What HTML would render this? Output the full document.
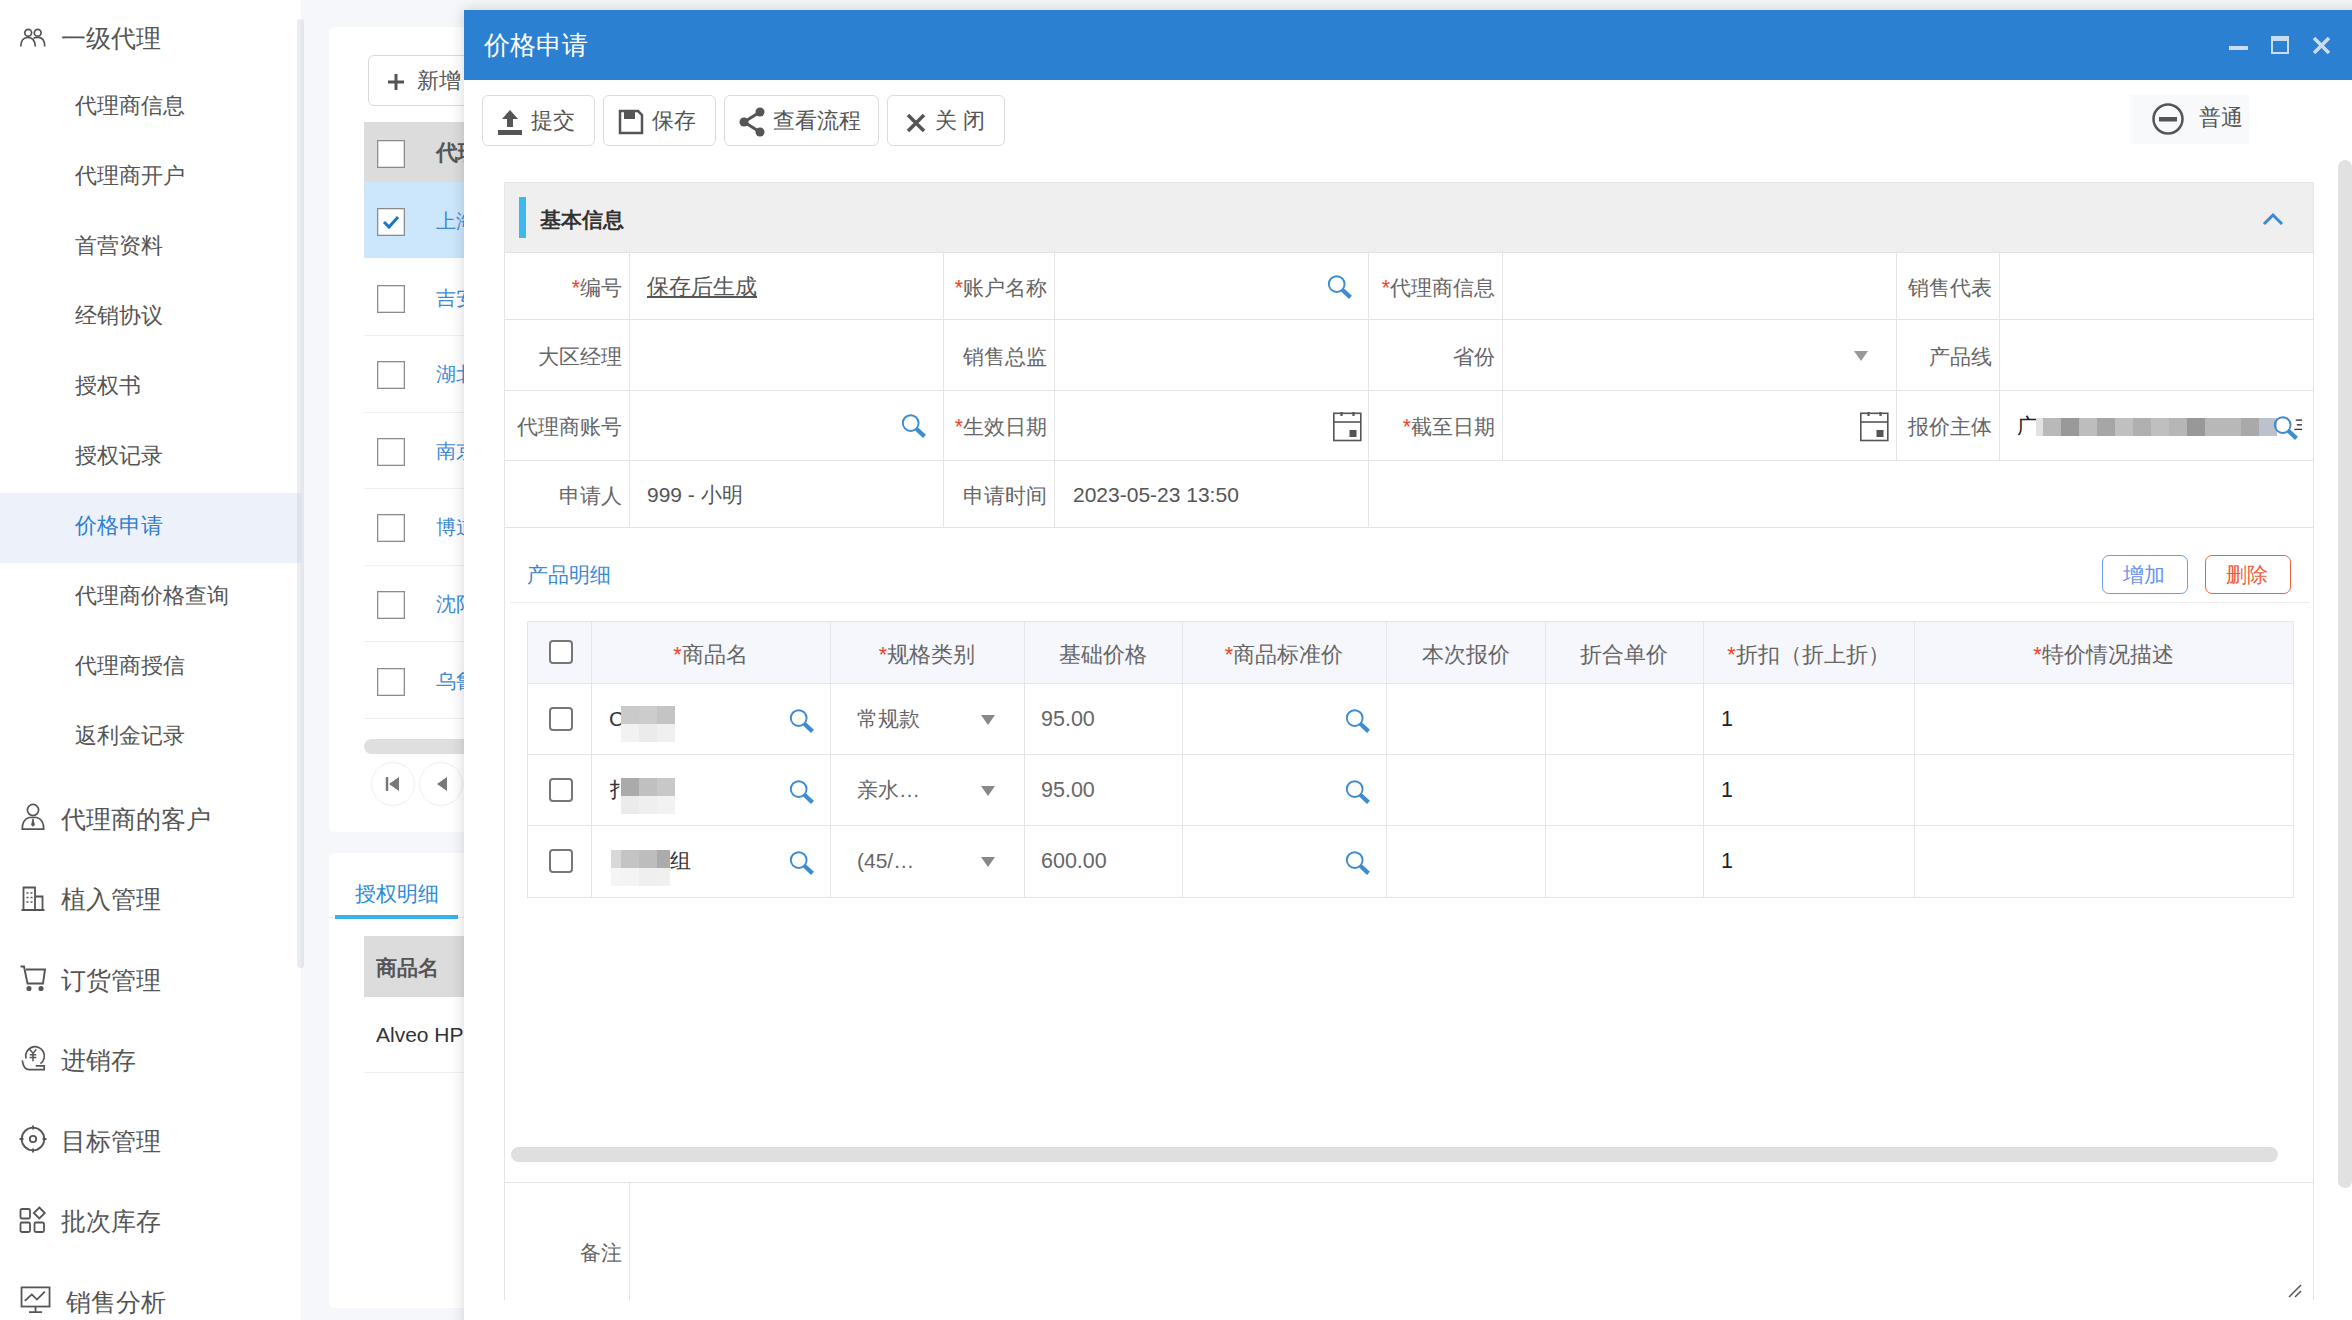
<!DOCTYPE html>
<html><head><meta charset="utf-8">
<style>
*{box-sizing:border-box;margin:0;padding:0}
html,body{width:2352px;height:1320px;overflow:hidden;background:#f5f7fb;font-family:"Liberation Sans",sans-serif;color:#555}
.a{position:absolute}
.t{position:absolute;white-space:nowrap;line-height:1}
/* sidebar */
#side{position:absolute;left:0;top:0;width:301px;height:1320px;background:#fff}
.si{position:absolute;left:75px;font-size:22.25px;margin-top:2px;color:#555;white-space:nowrap;line-height:1}
.sg{position:absolute;left:61px;font-size:25px;color:#555;white-space:nowrap;line-height:1}
.ic{position:absolute;left:19px;width:28px;height:28px}
.cbx{width:28px;height:28px;border:1px solid #8c8c8c;box-shadow:inset 0 0 0 0.5px #bbb;background:#fff}
.blu{font-size:20px;color:#3d8bd6;margin-top:2px}
.rl{left:364px;width:300px;height:1px;background:#eef0f4}
.tb{top:95px;height:51px;border:1px solid #dcdcdc;border-radius:6px;background:#fff}
.tbt{top:110px;font-size:22px;color:#555}
.hl{left:504px;width:1810px;height:1px;background:#e4e4e4}
.vl{width:1px;background:#e4e4e4}
.lb{font-size:21.25px;color:#666;margin-top:2.5px}
.th{font-size:21.5px;color:#666;text-align:center;margin-top:2.5px}
.rcb{width:24px;height:24px;border:2px solid #777;border-radius:4px;background:#fff}
</style></head><body>

<svg width="0" height="0" style="position:absolute"><defs>
<g id="srch"><circle cx="10.7" cy="10.1" r="7.9" fill="none" stroke="#3d8bd0" stroke-width="1.9"/><path d="M16.3 15.8l8.2 7.6" stroke="#3d8bd0" stroke-width="4.2"/></g>
<g id="cal" fill="none" stroke="#555" stroke-width="1.6"><rect x="0.8" y="1.3" width="27" height="27.2"/><path d="M0.8 10h27"/><path d="M8.5 0v4M20.5 0v4" stroke-width="2.2"/><rect x="16.5" y="18" width="7" height="7" fill="#555" stroke="none"/></g>
</defs></svg>
<div id="side">
  <div class="a" style="left:0;top:493px;width:301px;height:70px;background:#edf2fa"></div>
  <svg class="ic" style="top:24px" viewBox="0 0 28 28" fill="none" stroke="#555" stroke-width="1.7"><circle cx="9.2" cy="8.7" r="3.4"/><circle cx="18.7" cy="8.7" r="3.4"/><path d="M1.8 22.4C1.8 16.5 5 13.3 9 13.3S16.3 16.5 16.3 22.4"/><path d="M14.5 14.3C15.6 13.6 17 13.3 18.7 13.3 23 13.3 25.8 16.5 25.8 22.4"/></svg>
  <div class="sg" style="top:26px">一级代理</div>
  <div class="si" style="top:93px">代理商信息</div>
  <div class="si" style="top:163px">代理商开户</div>
  <div class="si" style="top:233px">首营资料</div>
  <div class="si" style="top:303px">经销协议</div>
  <div class="si" style="top:373px">授权书</div>
  <div class="si" style="top:443px">授权记录</div>
  <div class="si" style="top:513px;color:#2f7fd1">价格申请</div>
  <div class="si" style="top:583px">代理商价格查询</div>
  <div class="si" style="top:653px">代理商授信</div>
  <div class="si" style="top:723px">返利金记录</div>
  <svg class="ic" style="top:803px" viewBox="0 0 28 30" fill="none" stroke="#555" stroke-width="1.8"><circle cx="14" cy="7.5" r="6"/><path d="M2.5 28Q2.5 17.5 10 15.5H18Q25.5 17.5 25.5 28Z"/><path d="M14 17l-1.5 6.5L14 25l1.5-1.5z" fill="#555" stroke-width="1"/></svg>
  <div class="sg" style="top:807px">代理商的客户</div>
  <svg class="ic" style="top:885px" viewBox="0 0 28 28" fill="none" stroke="#555" stroke-width="1.8"><path d="M4.5 25V2.5H16V25M16 11.5h7.5V25M2.5 25h23"/><path d="M7.5 8h2M11.5 8h2M7.5 12.5h2M11.5 12.5h2M7.5 17h2M11.5 17h2" stroke-width="1.6"/></svg>
  <div class="sg" style="top:887px">植入管理</div>
  <svg class="ic" style="top:964px" viewBox="0 0 28 28" fill="none" stroke="#555" stroke-width="1.9"><path d="M1.5 2.5h3.5l3.5 17H24l2-14H7"/><circle cx="10" cy="24.5" r="1.6" fill="#555"/><circle cx="22" cy="24.5" r="1.6" fill="#555"/></svg>
  <div class="sg" style="top:968px">订货管理</div>
  <svg class="ic" style="top:1044px" viewBox="0 0 28 30" fill="none" stroke="#555" stroke-width="1.8"><path d="M6.5 15.5A10 10 0 1 1 22 21"/><path d="M10.5 6l3.5 4 3.5-4M14 10v8.5M10.5 11.5h7M10.5 14.5h7" stroke-width="1.6"/><path d="M2.5 17.5C3.5 25 7 27.5 10 27.5H26V23.5H17"/></svg>
  <div class="sg" style="top:1048px">进销存</div>
  <svg class="ic" style="top:1125px" viewBox="0 0 28 28" fill="none" stroke="#555" stroke-width="1.8"><circle cx="14" cy="14" r="11.3"/><circle cx="14" cy="14" r="3.2"/><path d="M14 0.5v4M14 23.5v4M0.5 14h4M23.5 14h4"/></svg>
  <div class="sg" style="top:1129px">目标管理</div>
  <svg class="ic" style="top:1206px" viewBox="0 0 28 28" fill="none" stroke="#555" stroke-width="1.8"><rect x="1.5" y="3" width="9.5" height="9.5" rx="1.5"/><rect x="1.5" y="16.5" width="9.5" height="9.5" rx="1.5"/><rect x="15.5" y="16.5" width="9.5" height="9.5" rx="1.5"/><path d="M20.3 1.5l5.5 5.5-5.5 5.5-5.5-5.5z"/></svg>
  <div class="sg" style="top:1209px">批次库存</div>
  <svg class="ic" style="top:1286px;width:34px" viewBox="0 0 34 30" fill="none" stroke="#555" stroke-width="1.9"><rect x="1.5" y="1.5" width="30" height="20.5"/><path d="M5 16l7.5-7 5.5 5.5 8.5-8.5M16.5 22v5M9.5 28h14"/></svg>
  <div class="sg" style="top:1290px;left:66px">销售分析</div>
  <div class="a" style="left:297px;top:19px;width:7px;height:949px;background:rgba(190,196,204,0.32);border-radius:4px"></div>
</div>

<!-- BG -->
<div id="bg">
  <div class="a" style="left:329px;top:27px;width:400px;height:805px;background:#fff;border-radius:6px"></div>
  <div class="a" style="left:368px;top:55px;width:200px;height:51px;border:1px solid #d9d9d9;border-radius:6px;background:#fff"></div>
  <svg class="a" style="left:387px;top:73px" width="18" height="18" viewBox="0 0 18 18"><path d="M9 1v16M1 9h16" stroke="#555" stroke-width="3"/></svg>
  <div class="t" style="left:417px;top:70px;font-size:22px;color:#555">新增</div>
  <div class="a" style="left:364px;top:122px;width:300px;height:60px;background:#dcdcdc"></div>
  <div class="a" style="left:364px;top:182px;width:300px;height:76px;background:#cce6fb"></div>
  <div class="t" style="left:436px;top:142px;font-size:22px;font-weight:bold;color:#555">代理</div>
  <div class="a cbx" style="left:377px;top:140px"></div>
  <div class="a cbx" style="left:377px;top:208px"></div>
  <svg class="a" style="left:381px;top:213px" width="20" height="18" viewBox="0 0 20 18"><path d="M3 9l5 5 9-10" stroke="#1a75c9" stroke-width="3" fill="none"/></svg>
  <div class="t blu" style="left:436px;top:209px">上海</div>
  <div class="a cbx" style="left:377px;top:285px"></div>
  <div class="t blu" style="left:436px;top:286px">吉安</div>
  <div class="a rl" style="top:335px"></div>
  <div class="a cbx" style="left:377px;top:361px"></div>
  <div class="t blu" style="left:436px;top:362px">湖北</div>
  <div class="a rl" style="top:412px"></div>
  <div class="a cbx" style="left:377px;top:438px"></div>
  <div class="t blu" style="left:436px;top:439px">南京</div>
  <div class="a rl" style="top:488px"></div>
  <div class="a cbx" style="left:377px;top:514px"></div>
  <div class="t blu" style="left:436px;top:515px">博道</div>
  <div class="a rl" style="top:565px"></div>
  <div class="a cbx" style="left:377px;top:591px"></div>
  <div class="t blu" style="left:436px;top:592px">沈阳</div>
  <div class="a rl" style="top:641px"></div>
  <div class="a cbx" style="left:377px;top:668px"></div>
  <div class="t blu" style="left:436px;top:669px">乌鲁</div>
  <div class="a rl" style="top:718px"></div>
  <div class="a" style="left:364px;top:739px;width:300px;height:15px;background:#dfdfdf;border-radius:8px"></div>
  <div class="a" style="left:371px;top:762px;width:44px;height:44px;border:1px solid #eceef3;border-radius:50%;background:#fff"></div>
  <svg class="a" style="left:385px;top:775px" width="16" height="18" viewBox="0 0 16 18"><path d="M2 2v14" stroke="#777" stroke-width="2.5"/><path d="M14 2v14L4 9z" fill="#777"/></svg>
  <div class="a" style="left:419px;top:762px;width:44px;height:44px;border:1px solid #eceef3;border-radius:50%;background:#fff"></div>
  <svg class="a" style="left:434px;top:775px" width="16" height="18" viewBox="0 0 16 18"><path d="M13 2v14L3 9z" fill="#777"/></svg>
  <div class="a" style="left:329px;top:853px;width:400px;height:455px;background:#fff;border-radius:6px"></div>
  <div class="a" style="left:329px;top:917px;width:300px;height:1px;background:#eceef2"></div>
  <div class="t" style="left:355px;top:883px;font-size:21px;color:#2d8ad8">授权明细</div>
  <div class="a" style="left:335px;top:915px;width:123px;height:4px;background:#3bb1ec"></div>
  <div class="a" style="left:364px;top:936px;width:300px;height:61px;background:#dcdcdc"></div>
  <div class="t" style="left:376px;top:957px;font-size:21px;font-weight:bold;color:#555">商品名</div>
  <div class="t" style="left:376px;top:1024px;font-size:21px;color:#333">Alveo HP</div>
  <div class="a rl" style="top:1072px"></div>
</div>

<!-- MODAL -->
<div id="modal">
  <div class="a" style="left:464px;top:10px;width:1900px;height:1320px;background:#fff;box-shadow:0 0 14px rgba(0,0,0,0.17)"></div>
  <div class="a" style="left:464px;top:10px;width:1900px;height:70px;background:#2b80d2"></div>
  <div class="t" style="left:484px;top:32px;font-size:26px;color:#fff">价格申请</div>
  <div class="a" style="left:2229px;top:46px;width:19px;height:4px;background:#c9ddf1"></div>
  <div class="a" style="left:2271px;top:36px;width:18px;height:18px;border:2px solid #c9ddf1;border-top-width:5px"></div>
  <svg class="a" style="left:2312px;top:36px" width="19" height="19" viewBox="0 0 19 19"><path d="M2 2l15 15M17 2L2 17" stroke="#c9ddf1" stroke-width="3.5"/></svg>

  <div class="a tb" style="left:482px;width:113px"></div>
  <svg class="a" style="left:497px;top:108px" width="26" height="27" viewBox="0 0 26 27"><path d="M13 2l-8 9h5v8h6v-8h5z" fill="#555"/><rect x="1" y="22" width="24" height="5" fill="#555"/></svg>
  <div class="t tbt" style="left:531px">提交</div>
  <div class="a tb" style="left:603px;width:113px"></div>
  <svg class="a" style="left:618px;top:109px" width="26" height="26" viewBox="0 0 26 26"><path d="M2 2h18l4 4v18H2z" fill="none" stroke="#555" stroke-width="2.5"/><rect x="6" y="2" width="11" height="8" fill="#555"/></svg>
  <div class="t tbt" style="left:652px">保存</div>
  <div class="a tb" style="left:724px;width:155px"></div>
  <svg class="a" style="left:738px;top:107px" width="28" height="30" viewBox="0 0 28 30"><path d="M22 5L6 15l16 10" fill="none" stroke="#555" stroke-width="3"/><circle cx="22" cy="5" r="4.5" fill="#555"/><circle cx="6" cy="15" r="4.5" fill="#555"/><circle cx="22" cy="25" r="4.5" fill="#555"/></svg>
  <div class="t tbt" style="left:773px">查看流程</div>
  <div class="a tb" style="left:887px;width:118px"></div>
  <svg class="a" style="left:906px;top:113px" width="20" height="20" viewBox="0 0 20 20"><path d="M2 2l16 16M18 2L2 18" stroke="#555" stroke-width="3.5"/></svg>
  <div class="t tbt" style="left:935px">关 闭</div>

  <div class="a" style="left:2130px;top:95px;width:119px;height:49px;background:#f8f9fb"></div>
  <svg class="a" style="left:2152px;top:103px" width="32" height="32" viewBox="0 0 32 32"><circle cx="16" cy="16" r="14.5" fill="none" stroke="#555" stroke-width="2.5"/><rect x="7" y="14" width="18" height="4.5" fill="#555"/></svg>
  <div class="t" style="left:2199px;top:107px;font-size:22px;color:#555">普通</div>

<div class="a" style="left:504px;top:182px;width:1810px;height:71px;background:#efefef;border:1px solid #e6e6e6;border-bottom:none"></div>
<div class="a" style="left:519px;top:197px;width:7px;height:41px;background:#3cb8ef"></div>
<div class="t" style="left:540px;top:209px;font-size:21px;font-weight:bold;color:#333">基本信息</div>
<svg class="a" style="left:2262px;top:211px" width="22" height="16" viewBox="0 0 22 16"><path d="M2 13l9-9 9 9" fill="none" stroke="#3a8ad3" stroke-width="3"/></svg>
<div class="a hl" style="top:252px"></div>
<div class="a hl" style="top:319px"></div>
<div class="a hl" style="top:390px"></div>
<div class="a hl" style="top:460px"></div>
<div class="a hl" style="top:527px"></div>
<div class="a vl" style="left:504px;top:252px;height:275px"></div>
<div class="a vl" style="left:629px;top:252px;height:275px"></div>
<div class="a vl" style="left:943px;top:252px;height:275px"></div>
<div class="a vl" style="left:1054px;top:252px;height:275px"></div>
<div class="a vl" style="left:1368px;top:252px;height:275px"></div>
<div class="a vl" style="left:1502px;top:252px;height:208px"></div>
<div class="a vl" style="left:1896px;top:252px;height:208px"></div>
<div class="a vl" style="left:1999px;top:252px;height:208px"></div>
<div class="a vl" style="left:2313px;top:252px;height:275px"></div>
<div class="t lb" style="right:1730px;top:275px"><span style="color:#f0431f">*</span>编号</div>
<div class="t lb" style="right:1305px;top:275px"><span style="color:#f0431f">*</span>账户名称</div>
<div class="t lb" style="right:857px;top:275px"><span style="color:#f0431f">*</span>代理商信息</div>
<div class="t lb" style="right:360px;top:275px">销售代表</div>
<div class="t lb" style="right:1730px;top:344px">大区经理</div>
<div class="t lb" style="right:1305px;top:344px">销售总监</div>
<div class="t lb" style="right:857px;top:344px">省份</div>
<div class="t lb" style="right:360px;top:344px">产品线</div>
<div class="t lb" style="right:1730px;top:414px">代理商账号</div>
<div class="t lb" style="right:1305px;top:414px"><span style="color:#f0431f">*</span>生效日期</div>
<div class="t lb" style="right:857px;top:414px"><span style="color:#f0431f">*</span>截至日期</div>
<div class="t lb" style="right:360px;top:414px">报价主体</div>
<div class="t lb" style="right:1730px;top:483px">申请人</div>
<div class="t lb" style="right:1305px;top:483px">申请时间</div>
<div class="t" style="left:647px;top:276px;font-size:22px;color:#555;text-decoration:underline">保存后生成</div>
<div class="t" style="left:647px;top:484px;font-size:21px;color:#555">999 - 小明</div>
<div class="t" style="left:1073px;top:484px;font-size:21px;color:#555">2023-05-23 13:50</div>
<svg class="a srch" style="left:1326px;top:274px" width="28" height="28" viewBox="0 0 28 28"><use href="#srch"/></svg>
<svg class="a srch" style="left:900px;top:413px" width="28" height="28" viewBox="0 0 28 28"><use href="#srch"/></svg>
<svg class="a" style="left:1333px;top:412px" width="30" height="30" viewBox="0 0 30 30"><use href="#cal"/></svg>
<svg class="a" style="left:1860px;top:412px" width="30" height="30" viewBox="0 0 30 30"><use href="#cal"/></svg>
<svg class="a" style="left:1853px;top:350px" width="16" height="12" viewBox="0 0 16 12"><path d="M1 1h14L8 11z" fill="#999"/></svg>
<div class="t" style="left:2017px;top:415px;font-size:21px;color:#222">广</div>
<div class="a" style="left:2036px;top:418px;width:7px;height:18px;background:#e2e2e2"></div><div class="a" style="left:2043px;top:418px;width:18px;height:18px;background:#b9b9b9"></div><div class="a" style="left:2061px;top:418px;width:18px;height:18px;background:#999999"></div><div class="a" style="left:2079px;top:418px;width:18px;height:18px;background:#bdbdbd"></div><div class="a" style="left:2097px;top:418px;width:18px;height:18px;background:#a6a6a6"></div><div class="a" style="left:2115px;top:418px;width:18px;height:18px;background:#c0c0c0"></div><div class="a" style="left:2133px;top:418px;width:18px;height:18px;background:#b0b0b0"></div><div class="a" style="left:2151px;top:418px;width:18px;height:18px;background:#bfbfbf"></div><div class="a" style="left:2169px;top:418px;width:18px;height:18px;background:#b6b6b6"></div><div class="a" style="left:2187px;top:418px;width:18px;height:18px;background:#989898"></div><div class="a" style="left:2205px;top:418px;width:36px;height:18px;background:#b8b8b8"></div><div class="a" style="left:2241px;top:418px;width:18px;height:18px;background:#a9a9a9"></div><div class="a" style="left:2259px;top:418px;width:18px;height:18px;background:#bcc2cb"></div>
<svg class="a srch" style="left:2272px;top:415px" width="28" height="28" viewBox="0 0 28 28"><use href="#srch"/></svg>
<div class="t" style="left:2294px;top:415px;font-size:21px;color:#333;width:8px;overflow:hidden">丰</div>
<div class="t" style="left:527px;top:564px;font-size:21px;color:#3a8ad3">产品明细</div>
<div class="a" style="left:510px;top:602px;width:1800px;height:1px;background:#eeeeee"></div>
<div class="a" style="left:2102px;top:555px;width:86px;height:39px;border:1px solid #6f97f3;border-radius:7px"></div>
<div class="t" style="left:2123px;top:564px;font-size:21px;color:#6a93ef">增加</div>
<div class="a" style="left:2205px;top:555px;width:86px;height:39px;border:1px solid #f0603f;border-radius:7px"></div>
<div class="t" style="left:2226px;top:564px;font-size:21px;color:#ef5b3a">删除</div>
<div class="a" style="left:527px;top:621px;width:1767px;height:62px;background:#f6f7fc"></div>
<div class="a" style="left:527px;top:621px;width:1767px;height:1px;background:#e4e6ea"></div>
<div class="a" style="left:527px;top:683px;width:1767px;height:1px;background:#e4e6ea"></div>
<div class="a" style="left:527px;top:754px;width:1767px;height:1px;background:#e4e6ea"></div>
<div class="a" style="left:527px;top:825px;width:1767px;height:1px;background:#e4e6ea"></div>
<div class="a" style="left:527px;top:897px;width:1767px;height:1px;background:#e4e6ea"></div>
<div class="a" style="left:527px;top:621px;width:1px;height:277px;background:#e4e6ea"></div>
<div class="a" style="left:591px;top:621px;width:1px;height:277px;background:#e4e6ea"></div>
<div class="a" style="left:830px;top:621px;width:1px;height:277px;background:#e4e6ea"></div>
<div class="a" style="left:1024px;top:621px;width:1px;height:277px;background:#e4e6ea"></div>
<div class="a" style="left:1182px;top:621px;width:1px;height:277px;background:#e4e6ea"></div>
<div class="a" style="left:1386px;top:621px;width:1px;height:277px;background:#e4e6ea"></div>
<div class="a" style="left:1545px;top:621px;width:1px;height:277px;background:#e4e6ea"></div>
<div class="a" style="left:1703px;top:621px;width:1px;height:277px;background:#e4e6ea"></div>
<div class="a" style="left:1914px;top:621px;width:1px;height:277px;background:#e4e6ea"></div>
<div class="a" style="left:2293px;top:621px;width:1px;height:277px;background:#e4e6ea"></div>
<div class="t th" style="left:591px;width:239px;top:642px"><span style="color:#f0431f">*</span>商品名</div>
<div class="t th" style="left:830px;width:194px;top:642px"><span style="color:#f0431f">*</span>规格类别</div>
<div class="t th" style="left:1024px;width:158px;top:642px">基础价格</div>
<div class="t th" style="left:1182px;width:204px;top:642px"><span style="color:#f0431f">*</span>商品标准价</div>
<div class="t th" style="left:1386px;width:159px;top:642px">本次报价</div>
<div class="t th" style="left:1545px;width:158px;top:642px">折合单价</div>
<div class="t th" style="left:1703px;width:211px;top:642px"><span style="color:#f0431f">*</span>折扣（折上折）</div>
<div class="t th" style="left:1914px;width:379px;top:642px"><span style="color:#f0431f">*</span>特价情况描述</div>
<div class="a rcb" style="left:549px;top:640px"></div>
<div class="a rcb" style="left:549px;top:707px"></div>
<div class="a rcb" style="left:549px;top:778px"></div>
<div class="a rcb" style="left:549px;top:849px"></div>
<svg class="a" style="left:788px;top:708px" width="28" height="28" viewBox="0 0 28 28"><use href="#srch"/></svg>
<svg class="a" style="left:1344px;top:708px" width="28" height="28" viewBox="0 0 28 28"><use href="#srch"/></svg>
<div class="t" style="left:857px;top:708px;font-size:21px;color:#666">常规款</div>
<svg class="a" style="left:980px;top:714px" width="16" height="12" viewBox="0 0 16 12"><path d="M1 1h14L8 11z" fill="#888"/></svg>
<div class="t" style="left:1041px;top:709px;font-size:21.5px;color:#666">95.00</div>
<div class="t" style="left:1721px;top:709px;font-size:21.5px;color:#222">1</div>
<svg class="a" style="left:788px;top:779px" width="28" height="28" viewBox="0 0 28 28"><use href="#srch"/></svg>
<svg class="a" style="left:1344px;top:779px" width="28" height="28" viewBox="0 0 28 28"><use href="#srch"/></svg>
<div class="t" style="left:857px;top:779px;font-size:21px;color:#666">亲水…</div>
<svg class="a" style="left:980px;top:785px" width="16" height="12" viewBox="0 0 16 12"><path d="M1 1h14L8 11z" fill="#888"/></svg>
<div class="t" style="left:1041px;top:780px;font-size:21.5px;color:#666">95.00</div>
<div class="t" style="left:1721px;top:780px;font-size:21.5px;color:#222">1</div>
<svg class="a" style="left:788px;top:850px" width="28" height="28" viewBox="0 0 28 28"><use href="#srch"/></svg>
<svg class="a" style="left:1344px;top:850px" width="28" height="28" viewBox="0 0 28 28"><use href="#srch"/></svg>
<div class="t" style="left:857px;top:850px;font-size:21px;color:#666">(45/…</div>
<svg class="a" style="left:980px;top:856px" width="16" height="12" viewBox="0 0 16 12"><path d="M1 1h14L8 11z" fill="#888"/></svg>
<div class="t" style="left:1041px;top:851px;font-size:21.5px;color:#666">600.00</div>
<div class="t" style="left:1721px;top:851px;font-size:21.5px;color:#222">1</div>
<div class="t" style="left:609px;top:708px;font-size:21px;color:#333">C</div>


<div class="t" style="left:609px;top:779px;font-size:21px;color:#333;width:12px;overflow:hidden">扌</div>




<div class="a" style="left:621px;top:706px;width:18px;height:18px;background:#cacaca"></div>
<div class="a" style="left:621px;top:724px;width:18px;height:18px;background:#f2f2f2"></div>
<div class="a" style="left:639px;top:706px;width:18px;height:18px;background:#cccccc"></div>
<div class="a" style="left:639px;top:724px;width:18px;height:18px;background:#ebebeb"></div>
<div class="a" style="left:657px;top:706px;width:18px;height:18px;background:#c4c4c4"></div>
<div class="a" style="left:657px;top:724px;width:18px;height:18px;background:#f0f0f0"></div>
<div class="a" style="left:621px;top:778px;width:18px;height:18px;background:#aaaaaa"></div>
<div class="a" style="left:621px;top:796px;width:18px;height:18px;background:#ebebeb"></div>
<div class="a" style="left:639px;top:778px;width:18px;height:18px;background:#c0c0c0"></div>
<div class="a" style="left:639px;top:796px;width:18px;height:18px;background:#efefef"></div>
<div class="a" style="left:657px;top:778px;width:18px;height:18px;background:#c8c8c8"></div>
<div class="a" style="left:657px;top:796px;width:18px;height:18px;background:#f2f2f2"></div>
<div class="a" style="left:611px;top:850px;width:10px;height:18px;background:#d8d8d8"></div>
<div class="a" style="left:611px;top:868px;width:10px;height:18px;background:#f5f5f5"></div>
<div class="a" style="left:621px;top:850px;width:18px;height:18px;background:#c4c4c4"></div>
<div class="a" style="left:621px;top:868px;width:18px;height:18px;background:#f4f4f4"></div>
<div class="a" style="left:639px;top:850px;width:18px;height:18px;background:#bdbdbd"></div>
<div class="a" style="left:639px;top:868px;width:18px;height:18px;background:#efefef"></div>
<div class="a" style="left:657px;top:850px;width:13px;height:18px;background:#ababab"></div>
<div class="a" style="left:657px;top:868px;width:13px;height:18px;background:#f0f0f0"></div>
<div class="t" style="left:670px;top:850px;font-size:21px;color:#333">组</div>
<div class="a" style="left:511px;top:1147px;width:1767px;height:15px;background:#dfdfdf;border-radius:8px"></div>
<div class="a" style="left:504px;top:1182px;width:1810px;height:1px;background:#e4e4e4"></div>
<div class="a" style="left:504px;top:1182px;width:1px;height:118px;background:#e4e4e4"></div>
<div class="a" style="left:629px;top:1182px;width:1px;height:118px;background:#e4e4e4"></div>
<div class="a" style="left:2313px;top:1182px;width:1px;height:118px;background:#e4e4e4"></div>
<div class="t lb" style="left:580px;top:1240px">备注</div>
<svg class="a" style="left:2288px;top:1284px" width="14" height="14" viewBox="0 0 14 14"><path d="M1 13L13 1M7 13l6-6" stroke="#555" stroke-width="1.5"/></svg>
<div class="a" style="left:504px;top:527px;width:1px;height:655px;background:#e4e4e4"></div>
<div class="a" style="left:2313px;top:527px;width:1px;height:655px;background:#e4e4e4"></div>
  <div class="a" style="left:2338px;top:160px;width:14px;height:1028px;background:#e1e1e1;border-radius:7px"></div>
</div>

</body></html>
